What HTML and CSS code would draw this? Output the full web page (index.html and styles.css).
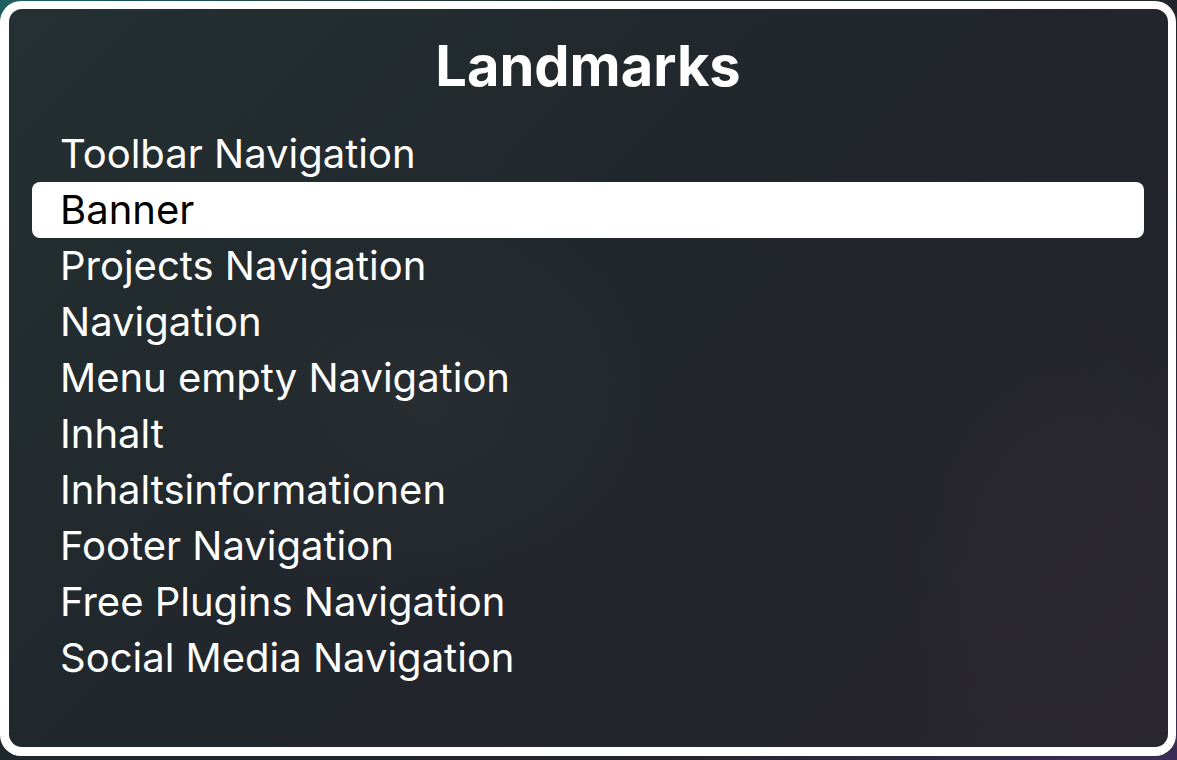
FILE: index.html
```html
<!DOCTYPE html>
<html lang="en">
<head>
    <meta charset="UTF-8">
    <meta name="viewport" content="width=device-width, initial-scale=1.0">
    <title>Landmarks</title>
    <link rel="stylesheet" href="styles.css">
</head>
<body>

    <div class="frame">
        <div class="panel">
            <h1>Landmarks</h1>
            <ul class="landmarks">
                <li>Toolbar Navigation</li>
                <li class="selected">Banner</li>
                <li>Projects Navigation</li>
                <li>Navigation</li>
                <li>Menu empty Navigation</li>
                <li>Inhalt</li>
                <li>Inhaltsinformationen</li>
                <li>Footer Navigation</li>
                <li>Free Plugins Navigation</li>
                <li>Social Media Navigation</li>
            </ul>
        </div>
    </div>

</body>
</html>
```

FILE: styles.css
```css
html, body {
    height: 100%;
}

body {
    margin: 0;
    overflow: hidden;
    font-family: Inter, "Liberation Sans", Arial, sans-serif;
    background: linear-gradient(135deg, #1d6060 0%, #1d2a2e 30%, #22232b 70%, #3b2c55 100%);
}

.frame {
    box-sizing: border-box;
    width: 1176px;
    height: 755px;
    margin-top: 1px;
    border: 9px solid #fff;
    border-top-width: 8px;
    border-right-width: 8px;
    border-radius: 21px;
    background: #fff;
}

.panel {
    box-sizing: border-box;
    height: 100%;
    padding: 24px 24px 0 23px;
    border-radius: 13px;
    background:
        radial-gradient(ellipse 260px 200px at 420px 400px, rgba(50, 56, 58, 0.35), transparent),
        radial-gradient(ellipse 200px 260px at 1050px 520px, rgba(48, 44, 50, 0.4), transparent),
        linear-gradient(135deg, #243032 0%, #21272c 45%, #24242c 75%, #29262f 100%);
}

h1 {
    margin: 0 0 27px;
    font-size: 56px;
    line-height: 66px;
    font-weight: bold;
    text-align: center;
    color: #fff;
}

.landmarks {
    list-style: none;
    margin: 0;
    padding: 0;
}

.landmarks li {
    height: 56px;
    padding-left: 28px;
    font-size: 40px;
    line-height: 56px;
    color: #fff;
    border-radius: 8px;
}

.landmarks li.selected {
    background: #fff;
    color: #000;
}
```
